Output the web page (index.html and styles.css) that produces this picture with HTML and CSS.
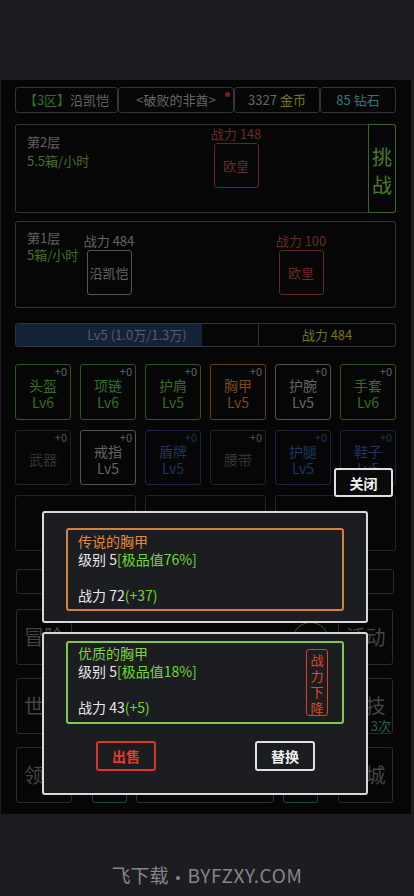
FILE: index.html
```html
<!DOCTYPE html>
<html lang="zh-CN">
<head>
    <meta charset="UTF-8">
    <meta name="viewport" content="width=device-width, initial-scale=1.0">
    <title>装备对比</title>
    <link rel="stylesheet" href="styles.css">
</head>
<body>
    <div class="screen">
        <div class="topbar">
            <div class="tb-cell"><span class="green">【3区】</span>沿凯恺</div>
            <div class="tb-cell">&lt;破败的非酋&gt;<span class="dot"></span></div>
            <div class="tb-cell">3327 <span class="olive">金币</span></div>
            <div class="tb-cell teal">85 钻石</div>
        </div>

        <div class="layer layer-2">
            <div class="layer-info">
                <div>第2层</div>
                <div class="green-text">5.5箱/小时</div>
            </div>
            <div class="unit enemy">
                <div class="unit-power">战力 148</div>
                <div class="unit-box">欧皇</div>
            </div>
            <div class="challenge">
                <span>挑</span>
                <span>战</span>
            </div>
        </div>

        <div class="layer layer-1">
            <div class="layer-info">
                <div>第1层</div>
                <div class="green-text">5箱/小时</div>
            </div>
            <div class="unit">
                <div class="unit-power">战力 484</div>
                <div class="unit-box">沿凯恺</div>
            </div>
            <div class="unit enemy">
                <div class="unit-power">战力 100</div>
                <div class="unit-box">欧皇</div>
            </div>
        </div>

        <div class="levelbar">
            <div class="exp">
                <div class="exp-fill" style="width: 77%"></div>
                <span class="exp-text">Lv5 (1.0万/1.3万)</span>
            </div>
            <div class="power">战力 484</div>
        </div>

        <div class="equip-grid">
            <div class="equip green"><span class="plus">+0</span><span>头盔</span><span>Lv6</span></div>
            <div class="equip green"><span class="plus">+0</span><span>项链</span><span>Lv6</span></div>
            <div class="equip green"><span class="plus">+0</span><span>护肩</span><span>Lv5</span></div>
            <div class="equip orange"><span class="plus">+0</span><span>胸甲</span><span>Lv5</span></div>
            <div class="equip grey"><span class="plus">+0</span><span>护腕</span><span>Lv5</span></div>
            <div class="equip green"><span class="plus">+0</span><span>手套</span><span>Lv6</span></div>
        </div>
        <div class="equip-grid row-2">
            <div class="equip empty"><span class="plus">+0</span><span>武器</span></div>
            <div class="equip grey"><span class="plus">+0</span><span>戒指</span><span>Lv5</span></div>
            <div class="equip blue"><span class="plus">+0</span><span>盾牌</span><span>Lv5</span></div>
            <div class="equip empty"><span class="plus">+0</span><span>腰带</span></div>
            <div class="equip blue"><span class="plus">+0</span><span>护腿</span><span>Lv5</span></div>
            <div class="equip blue"><span class="plus">+0</span><span>鞋子</span><span>Lv5</span></div>
        </div>

        <div class="slot-row">
            <div class="slot"></div>
            <div class="slot"></div>
            <div class="slot"></div>
        </div>
        <div class="wide-bar"></div>

        <div class="main">
            <div class="side left">
                <div class="big-btn">冒险</div>
                <div class="big-btn">世界</div>
                <div class="big-btn">领地</div>
            </div>
            <div class="middle">
                <div class="circle"></div>
                <div class="mid-row">
                    <div class="mid-cell teal-border"></div>
                    <div class="mid-cell wide"></div>
                    <div class="mid-cell teal-border"></div>
                </div>
            </div>
            <div class="side right">
                <div class="big-btn">活动</div>
                <div class="big-btn">竞技<span class="times">3次</span></div>
                <div class="big-btn">商城</div>
            </div>
        </div>

        <!-- 装备对比弹窗 -->
        <div class="dialog">
            <button class="close-btn">关闭</button>
            <div class="modal">
                <div class="card legendary">
                    <div class="card-title">传说的胸甲</div>
                    <div>级别 5<span class="good">[极品值76%]</span></div>
                    <div>&nbsp;</div>
                    <div>战力 72<span class="good">(+37)</span></div>
                </div>
            </div>
            <div class="modal modal-2">
                <div class="card quality">
                    <div class="card-title">优质的胸甲</div>
                    <div>级别 5<span class="good">[极品值18%]</span></div>
                    <div>&nbsp;</div>
                    <div>战力 43<span class="good">(+5)</span></div>
                    <div class="down-tag">战力下降</div>
                </div>
                <div class="actions">
                    <button class="btn sell">出售</button>
                    <button class="btn replace">替换</button>
                </div>
            </div>
        </div>
    </div>

    <div class="watermark">飞下载<span class="wm-dot">•</span><span class="wm-site">BYFZXY.COM</span></div>
</body>
</html>
```

FILE: styles.css
```css
body {
    margin: 0;
    background-color: #1c1d20;
    font-family: "Noto Sans CJK SC", "Noto Sans", sans-serif;
    color: #636363;
}

.screen {
    position: relative;
    box-sizing: border-box;
    width: 410px;
    height: 734px;
    margin: 80px 0 0 1px;
    padding: 7px 15px 0 14px;
    background-color: #060606;
}

/* barra superior */
.topbar {
    display: grid;
    grid-template-columns: 103px 116px 86px 76px;
    height: 26px;
}

.tb-cell {
    position: relative;
    border: 1px solid #363636;
    border-radius: 3px;
    font-size: 13px;
    line-height: 24px;
    text-align: center;
    white-space: nowrap;
    color: #666;
}

.green { color: #2b722b; }
.olive { color: #7d741c; }
.teal { color: #287a7a; }

.dot {
    position: absolute;
    top: 4px;
    right: 3px;
    width: 5px;
    height: 5px;
    border-radius: 50%;
    background-color: #8a1a1a;
}

/* capas */
.layer {
    display: flex;
    align-items: flex-start;
    border: 1px solid #363636;
    border-radius: 3px;
    font-size: 13px;
}

.layer-2 {
    height: 87px;
    margin-top: 11px;
}

.layer-1 {
    height: 85px;
    margin-top: 8px;
}

.layer-info {
    width: 56px;
    padding-left: 11px;
    white-space: nowrap;
    color: #626262;
}

.layer-2 .layer-info {
    padding-top: 7px;
    line-height: 19px;
}

.layer-1 .layer-info {
    padding-top: 7px;
    line-height: 17px;
}

.green-text { color: #43702a; }

.unit {
    display: flex;
    flex-direction: column;
    align-items: center;
    width: 52px;
}

.layer-2 .unit {
    margin: 1px 0 0 127px;
}

.layer-1 .unit {
    margin-top: 11px;
}

.layer-1 .unit.enemy {
    margin-left: 140px;
}

.unit-power {
    line-height: 16px;
    white-space: nowrap;
}

.unit-box {
    display: flex;
    align-items: center;
    justify-content: center;
    box-sizing: border-box;
    width: 45px;
    height: 45px;
    margin-top: 1px;
    border: 1px solid #555;
    border-radius: 3px;
    color: #676767;
}

.enemy .unit-power,
.enemy .unit-box {
    color: #672c23;
}

.enemy .unit-box {
    border-color: #62281f;
}

.challenge {
    display: flex;
    flex-direction: column;
    align-items: center;
    justify-content: center;
    box-sizing: border-box;
    width: 28px;
    height: 89px;
    margin: -1px -1px 0 auto;
    padding-top: 4px;
    border: 1px solid #3a6428;
    border-radius: 0 3px 3px 0;
    font-size: 20px;
    line-height: 28px;
    color: #457c2c;
}

/* barra de nivel */
.levelbar {
    display: flex;
    height: 24px;
    margin-top: 15px;
    font-size: 13px;
}

.exp {
    position: relative;
    box-sizing: border-box;
    width: 244px;
    border: 1px solid #333;
    border-radius: 3px 0 0 3px;
    overflow: hidden;
}

.exp-fill {
    height: 100%;
    background-color: #132236;
}

.exp-text {
    position: absolute;
    top: 0;
    left: 0;
    right: 0;
    line-height: 22px;
    text-align: center;
    color: #585d6a;
}

.power {
    flex: 1;
    border: 1px solid #333;
    border-left: none;
    border-radius: 0 3px 3px 0;
    line-height: 22px;
    text-align: center;
    color: #77721b;
}

/* equipo */
.equip-grid {
    display: grid;
    grid-template-columns: repeat(6, 56px);
    gap: 9px;
    margin-top: 17px;
}

.equip-grid.row-2 {
    margin-top: 10px;
}

.equip {
    position: relative;
    display: flex;
    flex-direction: column;
    align-items: center;
    justify-content: center;
    box-sizing: border-box;
    height: 56px;
    padding-top: 4px;
    border: 1px solid #555;
    border-radius: 3px;
    font-size: 14px;
    line-height: 17px;
}

.row-2 .equip {
    height: 55px;
}

.plus {
    position: absolute;
    top: 0;
    right: 3px;
    font-size: 11px;
    line-height: 13px;
    color: #626262;
}

.equip.green { border-color: #2c561d; color: #386d24; }
.equip.orange { border-color: #673f15; color: #76491c; }
.equip.grey { border-color: #535353; color: #646464; }
.equip.blue { border-color: #16274550; border-color: #162745; color: #1e355e; }
.equip.empty { border-color: #232323; color: #333; }
.equip.blue .plus { color: #1e355e; }
.equip.empty .plus { color: #555; }

.slot-row {
    display: grid;
    grid-template-columns: repeat(3, 121px);
    gap: 9px;
    margin-top: 10px;
}

.slot {
    height: 56px;
    box-sizing: border-box;
    border: 1px solid #242424;
    border-radius: 3px;
}

.wide-bar {
    height: 25px;
    margin: 18px 2px 0 1px;
    box-sizing: border-box;
    border: 1px solid #2a2a2a;
    border-radius: 3px;
}

/* zona principal */
.main {
    display: flex;
    margin: 15px 3px 0 1px;
}

.side {
    display: flex;
    flex-direction: column;
    gap: 13px;
    width: 56px;
}

.side.right {
    width: 55px;
}

.big-btn {
    position: relative;
    display: flex;
    align-items: center;
    justify-content: center;
    box-sizing: border-box;
    height: 56px;
    border: 1px solid #2a2a2a;
    border-radius: 3px;
    font-size: 20px;
    line-height: 22px;
    color: #444;
    white-space: nowrap;
}

.times {
    position: absolute;
    right: 1px;
    bottom: 1px;
    font-size: 13px;
    line-height: 13px;
    color: #1d6456;
}

.middle {
    display: flex;
    flex-direction: column;
    flex: 1;
}

.circle {
    width: 37px;
    height: 37px;
    margin: 13px 0 0 220px;
    box-sizing: border-box;
    border: 1px solid #2d6426;
    border-radius: 50%;
}

.mid-row {
    display: flex;
    gap: 9px;
    height: 55px;
    margin-top: auto;
    padding-left: 20px;
}

.mid-cell {
    width: 35px;
    box-sizing: border-box;
    border: 1px solid #303030;
    border-radius: 3px;
}

.mid-cell.wide { width: 138px; }
.mid-cell.teal-border { border-color: #1c4640; }

/* dialogo */
.dialog {
    position: absolute;
    top: 388px;
    left: 41px;
    display: flex;
    flex-direction: column;
    width: 351px;
}

.close-btn {
    align-self: flex-end;
    width: 59px;
    height: 29px;
    padding: 0;
    border: 2px solid #e0e0e0;
    border-radius: 3px;
    background-color: #0a0a0a;
    font-family: inherit;
    font-size: 14px;
    font-weight: bold;
    color: #f2f2f2;
}

.modal {
    box-sizing: border-box;
    width: 326px;
    margin-top: 14px;
    padding: 15px 22px 10px;
    border: 2px solid #d8d8d8;
    border-radius: 3px;
    background-color: #1c1d20;
}

.modal-2 {
    margin-top: 9px;
    padding: 7px 22px 22px;
}

.card {
    position: relative;
    box-sizing: border-box;
    height: 83px;
    padding: 2px 10px 0;
    border: 2px solid #d4813a;
    border-radius: 3px;
    font-size: 14px;
    line-height: 18px;
    color: #e8e8e8;
}

.card.quality {
    padding-top: 1px;
    border-color: #84c84a;
}

.legendary .card-title { color: #e08a3e; }
.quality .card-title { color: #7bd43e; }
.good { color: #6fd83a; }

.down-tag {
    position: absolute;
    top: 6px;
    right: 14px;
    box-sizing: border-box;
    width: 22px;
    height: 67px;
    padding-top: 2px;
    border: 1px solid #d9402e;
    border-radius: 3px;
    font-size: 13px;
    line-height: 16px;
    text-align: center;
    color: #e8412e;
}

.actions {
    display: flex;
    justify-content: space-between;
    margin-top: 17px;
    padding: 0 29px 0 30px;
}

.btn {
    width: 60px;
    height: 30px;
    padding: 0;
    border-radius: 3px;
    background-color: transparent;
    font-family: inherit;
    font-size: 14px;
    font-weight: bold;
}

.btn.sell {
    border: 2px solid #d9362a;
    color: #e8392a;
}

.btn.replace {
    border: 2px solid #e0e0e0;
    color: #f0f0f0;
}

.watermark {
    margin-top: 49px;
    font-size: 19px;
    line-height: 24px;
    text-align: center;
    color: #8c8290;
}

.wm-dot {
    margin: 0 7px;
    font-family: "Liberation Sans", sans-serif;
    font-size: 14px;
}

.wm-site {
    letter-spacing: 0.6px;
}
```
